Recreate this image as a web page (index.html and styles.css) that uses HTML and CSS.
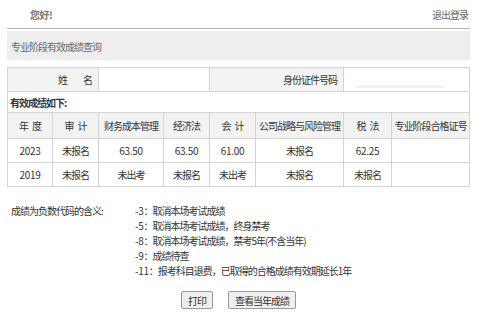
FILE: index.html
```html
<!DOCTYPE html>
<html lang="zh-CN">
<head>
  <meta charset="UTF-8">
  <title>专业阶段有效成绩查询</title>
  <link rel="stylesheet" href="styles.css">
</head>
<body>
  <div class="container">
    <!-- Top bar -->
    <div class="topbar">
      <span class="hello">您好!</span>
      <a class="logout" href="#">退出登录</a>
    </div>

    <div class="title-bar">专业阶段有效成绩查询</div>

    <!-- Score table -->
    <table class="score-table">
      <colgroup>
        <col style="width:45px">
        <col style="width:46px">
        <col style="width:65px">
        <col style="width:46px">
        <col style="width:46px">
        <col style="width:88px">
        <col style="width:48px">
        <col>
      </colgroup>
      <tr class="info-row">
        <td class="label" colspan="2">姓<span class="gap-wide"></span>名</td>
        <td colspan="2"></td>
        <td class="label" colspan="2">身份证件号码</td>
        <td colspan="2"><div class="id-value"></div></td>
      </tr>
      <tr>
        <td class="caption" colspan="8">有效成绩如下:</td>
      </tr>
      <tr class="head-row">
        <th>年<span class="gap"></span>度</th>
        <th>审<span class="gap"></span>计</th>
        <th>财务成本管理</th>
        <th>经济法</th>
        <th>会<span class="gap"></span>计</th>
        <th>公司战略与风险管理</th>
        <th>税<span class="gap"></span>法</th>
        <th>专业阶段合格证号</th>
      </tr>
      <tr>
        <td class="num">2023</td>
        <td>未报名</td>
        <td class="num">63.50</td>
        <td class="num">63.50</td>
        <td class="num">61.00</td>
        <td>未报名</td>
        <td class="num">62.25</td>
        <td></td>
      </tr>
      <tr>
        <td class="num">2019</td>
        <td>未报名</td>
        <td>未出考</td>
        <td>未报名</td>
        <td>未出考</td>
        <td>未报名</td>
        <td>未报名</td>
        <td></td>
      </tr>
    </table>

    <!-- Meaning of negative codes -->
    <div class="notes">
      <div class="notes-label">成绩为负数代码的含义:</div>
      <ul class="notes-list">
        <li><span class="num">-3</span>：取消本场考试成绩</li>
        <li><span class="num">-5</span>：取消本场考试成绩，终身禁考</li>
        <li><span class="num">-8</span>：取消本场考试成绩，禁考5年(不含当年)</li>
        <li><span class="num">-9</span>：成绩待查</li>
        <li><span class="num">-11</span>：报考科目退费，已取得的合格成绩有效期延长1年</li>
      </ul>
    </div>

    <div class="actions">
      <button>打印</button>
      <button>查看当年成绩</button>
    </div>
  </div>
</body>
</html>
```

FILE: styles.css
```css
body, ul, li {
  margin: 0;
  padding: 0;
}

*, *::before, *::after {
  box-sizing: border-box;
}

body {
  font-family: "Microsoft YaHei", "Noto Sans CJK SC", sans-serif;
  font-size: 10px;
  letter-spacing: -1px;
  color: #333;
  background-color: #fff;
}

.container {
  width: 463px;
  margin-left: 7px;
}

/* Top bar */
.topbar {
  display: flex;
  justify-content: space-between;
  align-items: center;
  height: 29px;
  padding: 0 2px 0 23px;
  border-bottom: 1px solid #b5b5b5;
}

.hello {
  color: #777;
  font-weight: bold;
  letter-spacing: -0.5px;
}

.logout {
  color: #666;
  text-decoration: none;
}

.title-bar {
  margin-top: 2px;
  height: 29px;
  line-height: 31px;
  padding-left: 4px;
  background-color: #eee;
  color: #666;
}

/* Score table */
.score-table {
  width: 463px;
  margin-top: 7px;
  border-collapse: collapse;
  table-layout: fixed;
  border: 1px solid #ccc;
}

.score-table td,
.score-table th {
  border: 1px solid #d4d4d4;
  height: 24px;
  padding: 0;
  text-align: center;
  font-weight: normal;
  white-space: nowrap;
}

.num {
  letter-spacing: -0.3px;
}

.gap {
  display: inline-block;
  width: 4px;
}

.gap-wide {
  display: inline-block;
  width: 16px;
}

.info-row .label {
  background-color: #f3f3f3;
  text-align: right;
  padding-right: 6px;
}

.id-value {
  width: 88px;
  height: 3px;
  margin: 13px 0 0 12px;
  background-color: #f2f2f2;
}

.score-table .caption {
  text-align: left;
  font-weight: bold;
  height: 21px;
  padding-left: 2px;
}

.head-row th {
  background-color: #f3f3f3;
  height: 26px;
}

/* Notes */
.notes {
  display: flex;
  margin-top: 16px;
  line-height: 15px;
}

.notes-label {
  width: 128px;
  padding-left: 4px;
}

.notes-list {
  list-style: none;
}

.actions {
  display: flex;
  justify-content: center;
  gap: 15px;
  margin-top: 13px;
}

button {
  font-family: inherit;
  font-size: 10px;
  letter-spacing: -1px;
  height: 18px;
  padding: 0 6px;
  color: #333;
  background-color: #efefef;
  border: 1px solid #999;
  border-radius: 2px;
}
```
